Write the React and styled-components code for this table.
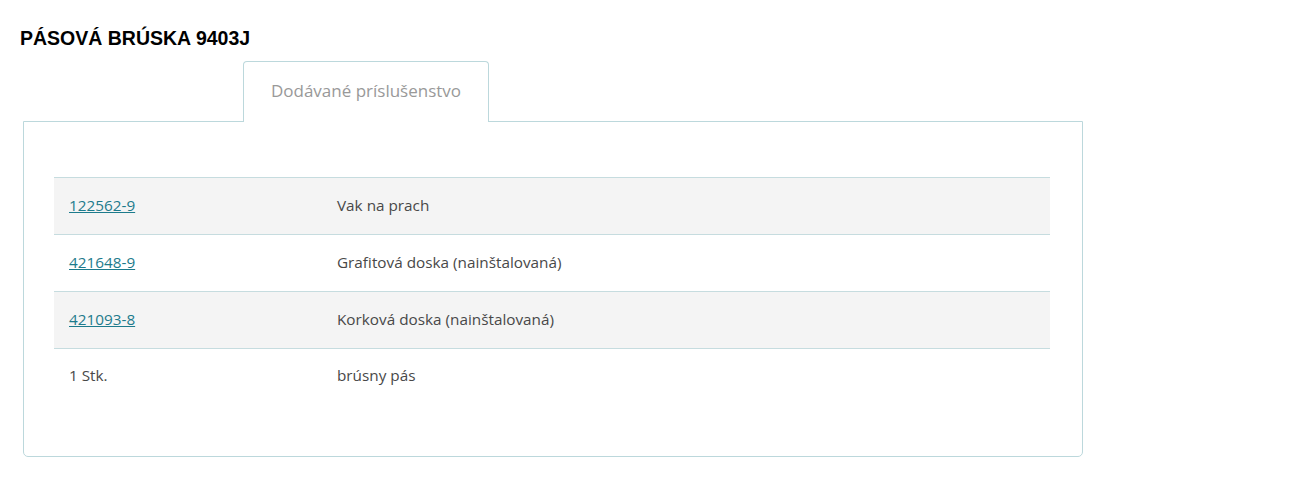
import React from "react";
import styled, { createGlobalStyle } from "styled-components";

const GlobalStyle = createGlobalStyle`
  body {
    margin: 0;
    background: #fff;
    font-family: "Open Sans", "Noto Sans", sans-serif;
  }
`;

const Page = styled.div`
  padding: 28px 0 0 20px;
  width: 1064px;
`;

const Title = styled.h2`
  margin: 0;
  font-family: "Liberation Sans", Arial, sans-serif;
  font-size: 19.5px;
  font-weight: bold;
  color: #000;
  line-height: 21px;
`;

const Tabs = styled.div`
  display: flex;
  padding-left: 223px;
  margin-top: 12px;
`;

const Tab = styled.div`
  width: 246px;
  height: 61px;
  box-sizing: border-box;
  border: 1px solid #bcd8dc;
  border-bottom: none;
  border-radius: 4px 4px 0 0;
  background: #fff;
  color: #999;
  font-size: 17px;
  display: flex;
  align-items: center;
  justify-content: center;
  position: relative;
  z-index: 1;
  margin-bottom: -1px;
  padding-bottom: 3px;
`;

const Panel = styled.div`
  margin-left: 3px;
  width: 1060px;
  box-sizing: border-box;
  border: 1px solid #bcd8dc;
  border-radius: 0 0 5px 5px;
  padding: 55px 32px 52px 30px;
`;

const Table = styled.div`
  display: flex;
  flex-direction: column;
`;

const Row = styled.div`
  display: grid;
  grid-template-columns: 268px 1fr;
  height: 57px;
  align-items: center;
  background: ${(p) => (p.$shaded ? "#f4f4f4" : "#fff")};
  border-top: 1px solid #c6dcdf;
  box-sizing: border-box;
  padding-bottom: 3px;
  &:last-child {
    height: 56px;
  }
`;

const Cell = styled.div`
  padding: 0 15px;
  font-size: 15.3px;
  color: #484848;
`;

const Link = styled.a`
  color: #1d7b8c;
  text-decoration: underline;
`;

const items = [
  { code: "122562-9", name: "Vak na prach", link: true },
  { code: "421648-9", name: "Grafitová doska (nainštalovaná)", link: true },
  { code: "421093-8", name: "Korková doska (nainštalovaná)", link: true },
  { code: "1 Stk.", name: "brúsny pás", link: false },
];

export default function App() {
  return (
    <>
      <GlobalStyle />
      <Page>
        <Title>PÁSOVÁ BRÚSKA 9403J</Title>
        <Tabs>
          <Tab>Dodávané príslušenstvo</Tab>
        </Tabs>
        <Panel>
          <Table>
            {items.map((it, i) => (
              <Row key={it.code} $shaded={i % 2 === 0}>
                <Cell>{it.link ? <Link href="#">{it.code}</Link> : it.code}</Cell>
                <Cell>{it.name}</Cell>
              </Row>
            ))}
          </Table>
        </Panel>
      </Page>
    </>
  );
}
